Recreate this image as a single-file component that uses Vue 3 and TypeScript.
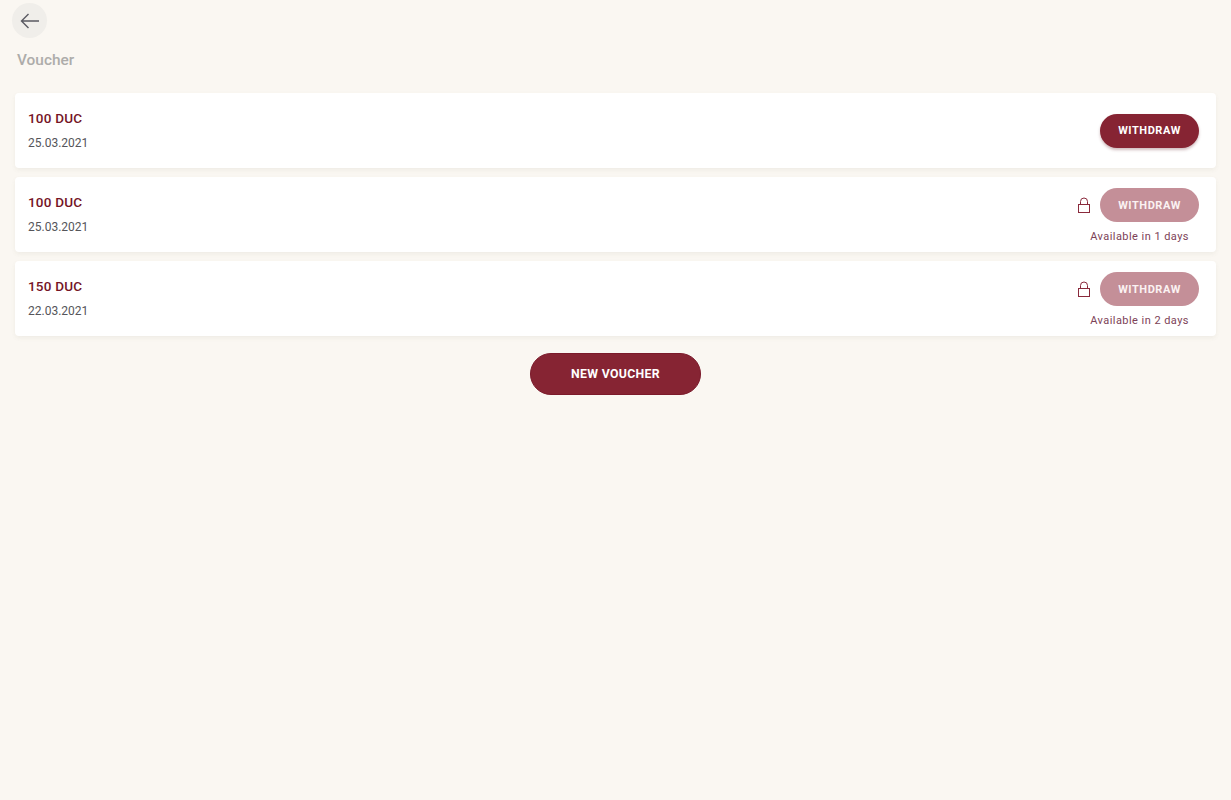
<template>
  <div class="page">
    <button class="back-btn" aria-label="Back">
      <svg width="24" height="24" viewBox="0 0 24 24" fill="none" stroke="#5a5a62" stroke-width="1.4">
        <path d="M21 12H3.5M10.5 5L3.5 12L10.5 19" />
      </svg>
    </button>
    <h1 class="title">Voucher</h1>

    <div class="list">
      <div v-for="v in vouchers" :key="v.id" class="card">
        <div class="info">
          <div class="amount">{{ v.amount }}</div>
          <div class="date">{{ v.date }}</div>
        </div>
        <div class="actions" :class="{ locked: v.lockedDays }">
          <div class="action-row">
            <svg v-if="v.lockedDays" class="lock" width="14" height="18" viewBox="0 0 14 18" fill="none" stroke="#8a2a3c" stroke-width="1">
              <rect x="1.5" y="8.5" width="11" height="8" />
              <path d="M3.5 8.5V5.5a3.5 3.5 0 0 1 7 0v3" />
            </svg>
            <button class="btn" :class="{ disabled: v.lockedDays }">WITHDRAW</button>
          </div>
          <div v-if="v.lockedDays" class="hint">Available in {{ v.lockedDays }} days</div>
        </div>
      </div>
    </div>

    <div class="footer">
      <button class="new-btn">NEW VOUCHER</button>
    </div>
  </div>
</template>

<script setup lang="ts">
interface Voucher {
  id: number
  amount: string
  date: string
  lockedDays?: number
}

const vouchers: Voucher[] = [
  { id: 1, amount: '100 DUC', date: '25.03.2021' },
  { id: 2, amount: '100 DUC', date: '25.03.2021', lockedDays: 1 },
  { id: 3, amount: '150 DUC', date: '22.03.2021', lockedDays: 2 }
]
</script>

<style>
html,
body {
  margin: 0;
  background: #faf7f2;
}
</style>

<style scoped>
.page {
  min-height: 800px;
  box-sizing: border-box;
  padding: 3px 15px 0;
  background: #faf7f2;
  font-family: Roboto, "Liberation Sans", sans-serif;
}

.back-btn {
  display: flex;
  align-items: center;
  justify-content: center;
  width: 35px;
  height: 35px;
  margin-left: -3px;
  padding: 0;
  border: none;
  border-radius: 50%;
  background: #f0eeea;
}

.title {
  margin: 13px 0 0 2px;
  font-size: 15.4px;
  line-height: 18px;
  font-weight: 500;
  color: #adacaa;
}

.list {
  display: flex;
  flex-direction: column;
  gap: 9px;
  margin-top: 24px;
}

.card {
  display: flex;
  justify-content: space-between;
  height: 75px;
  box-sizing: border-box;
  padding: 0 17px 0 13px;
  background: #fff;
  border-radius: 4px;
  box-shadow: 0 2px 4px rgba(120, 110, 90, 0.08);
}

.info {
  padding-top: 17px;
}

.amount {
  font-size: 13.5px;
  line-height: 17px;
  font-weight: 500;
  letter-spacing: 0.2px;
  color: #741426;
}

.date {
  margin-top: 9px;
  font-size: 12px;
  line-height: 15px;
  color: #55555a;
}

.actions {
  display: flex;
  flex-direction: column;
  align-items: flex-end;
  justify-content: center;
}

.actions.locked {
  justify-content: flex-start;
  padding-top: 11px;
}

.action-row {
  display: flex;
  align-items: center;
}

.lock {
  margin-right: 9px;
}

.btn {
  width: 99px;
  height: 34px;
  padding: 0;
  border: none;
  border-radius: 17px;
  background: #862433;
  box-shadow: 0 2px 3px rgba(100, 30, 40, 0.3);
  font-family: inherit;
  font-size: 11px;
  font-weight: 700;
  letter-spacing: 0.55px;
  color: #fff;
}

.btn.disabled {
  background: #c48f98;
  box-shadow: none;
  color: #fbf2f2;
}

.hint {
  margin-top: 8px;
  margin-right: 10px;
  font-size: 11px;
  line-height: 13px;
  letter-spacing: 0.45px;
  white-space: nowrap;
  color: #7d4257;
}

.footer {
  display: flex;
  justify-content: center;
  margin-top: 17px;
}

.new-btn {
  width: 171px;
  height: 42px;
  padding: 0;
  border: 1px solid #7b1a2b;
  border-radius: 21px;
  background: #862433;
  font-family: inherit;
  font-size: 12.3px;
  font-weight: 700;
  letter-spacing: 0.3px;
  color: #fff;
}
</style>
